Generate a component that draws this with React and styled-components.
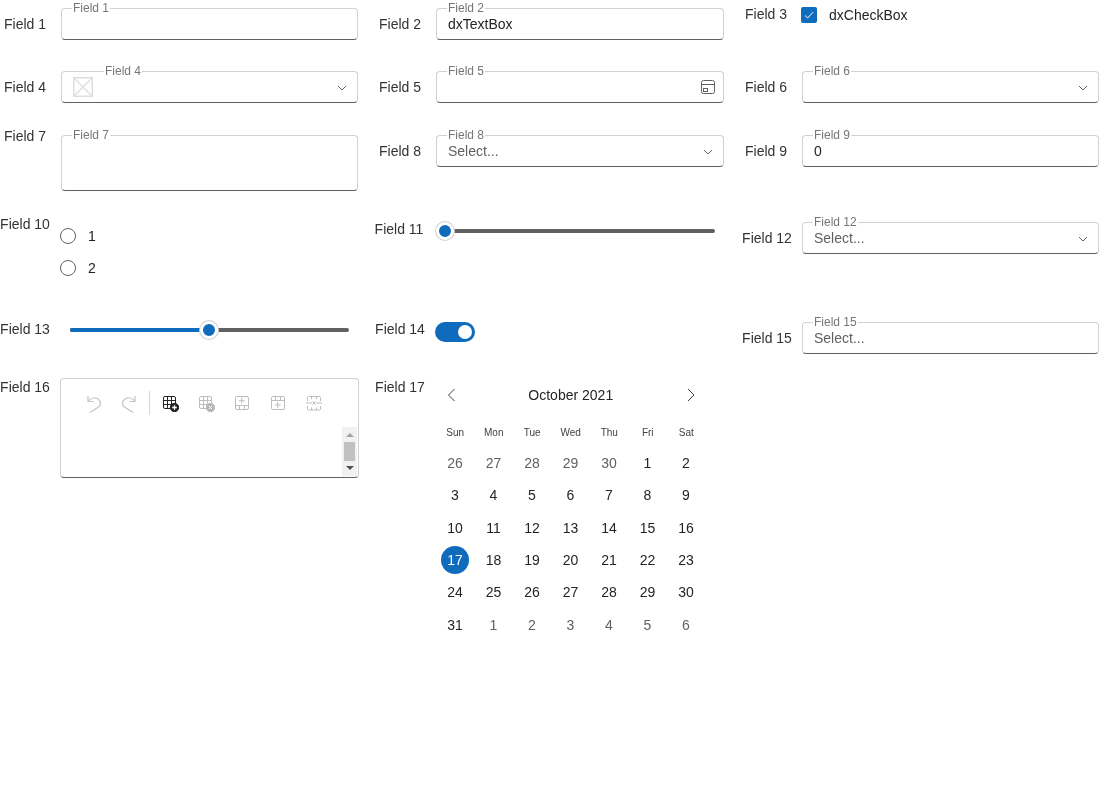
import React from "react";
import styled, { createGlobalStyle } from "styled-components";

const weekDays = ["Sun", "Mon", "Tue", "Wed", "Thu", "Fri", "Sat"];
const days = [
    26, 27, 28, 29, 30, 1, 2,
    3, 4, 5, 6, 7, 8, 9,
    10, 11, 12, 13, 14, 15, 16,
    17, 18, 19, 20, 21, 22, 23,
    24, 25, 26, 27, 28, 29, 30,
    31, 1, 2, 3, 4, 5, 6,
];

const Chevron = () => (
    <svg width="12" height="12" viewBox="0 0 12 12" fill="none" stroke="#616161">
        <path d="M2 5l4 4 4-4" />
    </svg>
);

const CalendarIcon = () => (
    <CalendarSvg width="16" height="16" viewBox="0 0 16 16" fill="none" stroke="#616161">
        <rect x="1.5" y="1.5" width="13" height="13" rx="2" />
        <path d="M1.5 5.500h13" />
        <rect x="3.500" y="9.500" width="4" height="3" />
    </CalendarSvg>
);

const EmptyImage = () => (
    <ImageIcon width="20" height="20" viewBox="0 0 20 20" fill="none" stroke="#dedede">
        <rect x="0.750" y="0.750" width="18.500" height="18.500" strokeWidth="1.500" />
        <path d="M1 1l18 18M19 1L1 19" strokeWidth="1.200" />
    </ImageIcon>
);

const TextBox = ({label, value, placeholder, labelLeft, height, icon, children}) => (
    <Box $height={height}>
        <Legend $left={labelLeft}>{label}</Legend>
        {children}
        {value && <Value>{value}</Value>}
        {placeholder && <Placeholder>{placeholder}</Placeholder>}
        {icon && <BoxIcon>{icon}</BoxIcon>}
    </Box>
);

const Slider = ({percent, left, width}) => (
    <SliderTrack $left={left} $width={width}>
        <SliderFill style={{width: `${percent}%`}} />
        <SliderThumb style={{left: `${percent}%`}} />
    </SliderTrack>
);

const TableGrid = () => (
    <>
        <rect x="2.500" y="2.500" width="12" height="12" rx="1.500" />
        <path d="M2.500 6.500h12M2.500 10.500h12M6.500 2.500v12M10.500 2.500v12" />
    </>
);

const Toolbar = () => (
    <ToolbarRow>
        <ToolButton>
            <svg width="20" height="20" viewBox="0 0 20 20" fill="none" stroke="#c4c4c4" strokeWidth="1.200">
                <path d="M4 3v5.500h5.500" />
                <path d="M4.200 8.500C7 4.500 11 4 14 6c3.500 2.500 3 6 .5 8L6 19.500" />
            </svg>
        </ToolButton>
        <ToolButton>
            <svg width="20" height="20" viewBox="0 0 20 20" fill="none" stroke="#c4c4c4" strokeWidth="1.200">
                <path d="M16 3v5.500h-5.500" />
                <path d="M15.800 8.500C13 4.500 9 4 6 6c-3.500 2.500-3 6-.5 8l8.500 5.500" />
            </svg>
        </ToolButton>
        <ToolSeparator />
        <ToolButton $wide>
            <svg width="18" height="18" viewBox="0 0 18 18" fill="none" stroke="#242424">
                <TableGrid />
                <circle cx="13.500" cy="13.500" r="4.200" fill="#242424" />
                <path d="M13.500 11.200v4.600M11.200 13.500h4.600" stroke="#fff" strokeWidth="1.300" />
            </svg>
        </ToolButton>
        <ToolButton $wide>
            <svg width="18" height="18" viewBox="0 0 18 18" fill="none" stroke="#bdbdbd">
                <TableGrid />
                <circle cx="13.500" cy="13.500" r="4.200" fill="#b5b5b5" />
                <path d="M12 12l3 3M15 12l-3 3" stroke="#fff" />
            </svg>
        </ToolButton>
        <ToolButton $wide>
            <svg width="18" height="18" viewBox="0 0 18 18" fill="none" stroke="#bdbdbd">
                <rect x="2.500" y="2.500" width="13" height="13" rx="1.500" />
                <path d="M2.500 11.500h13M6.500 11.500v4M11.500 11.500v4M8.700 3.700v6M5.700 6.700h6" />
            </svg>
        </ToolButton>
        <ToolButton $wide>
            <svg width="18" height="18" viewBox="0 0 18 18" fill="none" stroke="#bdbdbd">
                <rect x="2.500" y="2.500" width="13" height="13" rx="1.500" />
                <path d="M2.500 6.500h13M6.500 2.500v4M11.500 2.500v4M8.700 8v6M5.700 11h6" />
            </svg>
        </ToolButton>
        <ToolButton $wide>
            <svg width="18" height="18" viewBox="0 0 18 18" fill="none" stroke="#bdbdbd">
                <path d="M2.500 7V3.500a1 1 0 0 1 1-1h11a1 1 0 0 1 1 1V7M6.500 2.500V5M11.500 2.500V5" />
                <path d="M2.500 12v3a1 1 0 0 0 1 1h11a1 1 0 0 0 1-1v-3M6.500 13.500V16M11.500 13.500V16" />
                <path d="M1 9h6M11 9h6M7.500 7.500l3 3M10.500 7.500l-3 3" />
            </svg>
        </ToolButton>
    </ToolbarRow>
);

const Calendar = () => (
    <CalendarWrap>
        <CalendarHeader>
            <NavButton>
                <svg width="14" height="14" viewBox="0 0 14 14" fill="none" stroke="#424242">
                    <path d="M10.500 1L4.500 7l6 6" />
                </svg>
            </NavButton>
            <CalendarTitle>October 2021</CalendarTitle>
            <NavButton>
                <svg width="14" height="14" viewBox="0 0 14 14" fill="none" stroke="#424242">
                    <path d="M4 1l6 6-6 6" />
                </svg>
            </NavButton>
        </CalendarHeader>
        <WeekRow>
            {weekDays.map(day => <WeekDay key={day}>{day}</WeekDay>)}
        </WeekRow>
        <DayGrid>
            {days.map((day, i) => {
                const other = i < 5 || i > 35;
                return (
                    <Day key={i} $other={other}>
                        {i === 21 ? <Selected>{day}</Selected> : day}
                    </Day>
                );
            })}
        </DayGrid>
    </CalendarWrap>
);

const App = () => {
    return (
        <>
            <GlobalStyle />
            <Page>
                <Row $height={63}>
                    <Field>
                        <Label $top={16}>Field 1</Label>
                        <Editor $top={8}><TextBox label="Field 1" /></Editor>
                    </Field>
                    <Field>
                        <Label $top={16}>Field 2</Label>
                        <Editor $top={8}><TextBox label="Field 2" value="dxTextBox" /></Editor>
                    </Field>
                    <Field>
                        <Label $top={6}>Field 3</Label>
                        <Editor $top={7} $left={-1}>
                            <CheckRow>
                                <CheckBox>
                                    <svg width="12" height="12" viewBox="0 0 12 12" fill="none" stroke="#fff">
                                        <path d="M2 6.500l2.700 2.500L10 3.200" />
                                    </svg>
                                </CheckBox>
                                <span>dxCheckBox</span>
                            </CheckRow>
                        </Editor>
                    </Field>
                </Row>

                <Row $height={64}>
                    <Field>
                        <Label $top={16}>Field 4</Label>
                        <Editor $top={8}>
                            <TextBox label="Field 4" labelLeft={42} icon={<Chevron />}>
                                <EmptyImage />
                            </TextBox>
                        </Editor>
                    </Field>
                    <Field>
                        <Label $top={16}>Field 5</Label>
                        <Editor $top={8}><TextBox label="Field 5" icon={<CalendarIcon />} /></Editor>
                    </Field>
                    <Field>
                        <Label $top={16}>Field 6</Label>
                        <Editor $top={8}><TextBox label="Field 6" icon={<Chevron />} /></Editor>
                    </Field>
                </Row>

                <Row $height={80}>
                    <Field>
                        <Label $top={1}>Field 7</Label>
                        <Editor $top={8}><TextBox label="Field 7" height={56} /></Editor>
                    </Field>
                    <Field>
                        <Label $top={16}>Field 8</Label>
                        <Editor $top={8}><TextBox label="Field 8" placeholder="Select..." icon={<Chevron />} /></Editor>
                    </Field>
                    <Field>
                        <Label $top={16}>Field 9</Label>
                        <Editor $top={8}><TextBox label="Field 9" value="0" /></Editor>
                    </Field>
                </Row>

                <Row $height={107}>
                    <Field>
                        <Label $top={9}>Field 10</Label>
                        <Editor $top={21} $left={-1}>
                            <RadioGroup>
                                <RadioRow><Radio />1</RadioRow>
                                <RadioRow><Radio />2</RadioRow>
                            </RadioGroup>
                        </Editor>
                    </Field>
                    <Field>
                        <Label $top={14} $shift={-1}>Field 11</Label>
                        <Editor $top={22}><Slider percent={0} left={9} width={270} /></Editor>
                    </Field>
                    <Field>
                        <Label $top={23} $shift={1}>Field 12</Label>
                        <Editor $top={15}><TextBox label="Field 12" placeholder="Select..." icon={<Chevron />} /></Editor>
                    </Field>
                </Row>

                <Row $height={56}>
                    <Field>
                        <Label $top={7}>Field 13</Label>
                        <Editor $top={14} $left={9}><Slider percent={49.8} left={0} width={279} /></Editor>
                    </Field>
                    <Field>
                        <Label $top={7}>Field 14</Label>
                        <Editor $top={8} $left={-1}>
                            <Switch><SwitchKnob /></Switch>
                        </Editor>
                    </Field>
                    <Field>
                        <Label $top={16} $shift={1}>Field 15</Label>
                        <Editor $top={8}><TextBox label="Field 15" placeholder="Select..." /></Editor>
                    </Field>
                </Row>

                <Row $height={280}>
                    <Field>
                        <Label $top={9}>Field 16</Label>
                        <Editor $top={8} $left={-1}>
                            <HtmlBox>
                                <Toolbar />
                                <ScrollBar>
                                    <ScrollArrow $up />
                                    <ScrollThumb />
                                    <ScrollArrow />
                                </ScrollBar>
                            </HtmlBox>
                        </Editor>
                    </Field>
                    <Field>
                        <Label $top={9}>Field 17</Label>
                        <Editor $top={8}><Calendar /></Editor>
                    </Field>
                </Row>
            </Page>
        </>
    )
}

export default App;

const GlobalStyle = createGlobalStyle`
    * {
        box-sizing: border-box;
    }
    body {
        margin: 0;
        background: #fff;
        color: #242424;
        font-family: "Liberation Sans", Arial, sans-serif;
        font-size: 14px;
    }
`

const Page = styled.div`
    width: 1100px;
    will-change: transform;
`

const Row = styled.div`
    display: grid;
    grid-template-columns: 358px 349px 358px;
    column-gap: 17px;
    height: ${props => props.$height}px;
`

const Field = styled.div`
    display: flex;
    align-items: flex-start;
`

const Label = styled.div`
    flex: 0 0 50px;
    text-align: center;
    line-height: 16px;
    white-space: nowrap;
    color: #333;
    margin-top: ${props => props.$top}px;
    margin-left: ${props => props.$shift || 0}px;
    margin-right: ${props => -(props.$shift || 0)}px;
`

const Editor = styled.div`
    margin-top: ${props => props.$top}px;
    margin-left: ${props => 11 + (props.$left || 0)}px;
    flex: 1;
    min-width: 0;
`

const Box = styled.div`
    position: relative;
    display: flex;
    align-items: center;
    height: ${props => props.$height || 32}px;
    padding: 0 11px;
    border: 1px solid #d1d1d1;
    border-bottom-color: #616161;
    border-radius: 4px;
    background: #fff;
`

const Legend = styled.span`
    position: absolute;
    top: -7px;
    left: ${props => props.$left || 10}px;
    padding: 0 1px;
    font-size: 12px;
    line-height: 12px;
    color: #767676;
    background: #fff;
`

const Value = styled.span`
    color: #242424;
`

const Placeholder = styled.span`
    color: #616161;
`

const BoxIcon = styled.span`
    display: flex;
    margin-left: auto;
    margin-right: -2px;
`

const CalendarSvg = styled.svg`
    margin-right: -2px;
`

const ImageIcon = styled.svg`
    flex: none;
`

const CheckRow = styled.label`
    display: flex;
    align-items: center;
    gap: 12px;
`

const CheckBox = styled.span`
    display: flex;
    align-items: center;
    justify-content: center;
    width: 16px;
    height: 16px;
    border-radius: 2px;
    background: #0f6cbd;
`

const RadioGroup = styled.div`
    display: flex;
    flex-direction: column;
    gap: 15.5px;
`

const RadioRow = styled.label`
    display: flex;
    align-items: center;
    gap: 12px;
    height: 16px;
`

const Radio = styled.span`
    width: 16px;
    height: 16px;
    border: 1px solid #616161;
    border-radius: 50%;
`

const SliderTrack = styled.div`
    position: relative;
    width: ${props => props.$width}px;
    height: 4px;
    margin-left: ${props => props.$left}px;
    border-radius: 2px;
    background: #616161;
`

const SliderFill = styled.div`
    height: 100%;
    border-radius: 2px;
    background: #0f6cbd;
`

const SliderThumb = styled.div`
    position: absolute;
    top: 50%;
    width: 18px;
    height: 18px;
    border: 3px solid #fff;
    border-radius: 50%;
    background: #0f6cbd;
    box-shadow: 0 0 0 1px #d1d1d1;
    transform: translate(-50%, -50%);
`

const Switch = styled.div`
    display: flex;
    align-items: center;
    justify-content: flex-end;
    width: 40px;
    height: 20px;
    padding-right: 3px;
    border-radius: 10px;
    background: #0f6cbd;
`

const SwitchKnob = styled.span`
    width: 14px;
    height: 14px;
    border-radius: 50%;
    background: #fff;
`

const HtmlBox = styled.div`
    display: flex;
    flex-direction: column;
    width: 299px;
    height: 100px;
    border: 1px solid #d1d1d1;
    border-bottom-color: #616161;
    border-radius: 4px;
`

const ToolbarRow = styled.div`
    display: flex;
    align-items: center;
    height: 48px;
    padding-left: 15px;
`

const ToolButton = styled.span`
    display: flex;
    align-items: center;
    justify-content: center;
    width: ${props => props.$wide ? 36 : 35}px;
    height: 24px;
`

const ToolSeparator = styled.span`
    width: 1px;
    height: 24px;
    margin: 0 2px 0 3px;
    background: #d6d6d6;
`

const ScrollBar = styled.div`
    display: flex;
    flex-direction: column;
    align-items: center;
    align-self: flex-end;
    justify-content: space-between;
    width: 15px;
    height: 49px;
    margin-right: 1px;
    padding: 6px 0;
    background: #f1f1f1;
`

const ScrollThumb = styled.div`
    width: 11px;
    height: 19px;
    background: #c1c1c1;
`

const ScrollArrow = styled.span`
    width: 0;
    height: 0;
    border-left: 4px solid transparent;
    border-right: 4px solid transparent;
    border-top: ${props => props.$up ? "none" : "4px solid #505050"};
    border-bottom: ${props => props.$up ? "4px solid #a3a3a3" : "none"};
`

const CalendarWrap = styled.div`
    width: 269.5px;
`

const CalendarHeader = styled.div`
    display: flex;
    align-items: center;
    justify-content: space-between;
    height: 34px;
    margin-bottom: 5px;
    padding: 0 8px;
`

const NavButton = styled.span`
    display: flex;
    width: 14px;
`

const CalendarTitle = styled.span`
    color: #242424;
`

const WeekRow = styled.div`
    display: grid;
    grid-template-columns: repeat(7, 38.5px);
    height: 30px;
`

const WeekDay = styled.span`
    display: flex;
    align-items: center;
    justify-content: center;
    font-size: 10px;
    color: #424242;
`

const DayGrid = styled.div`
    display: grid;
    grid-template-columns: repeat(7, 38.5px);
    grid-auto-rows: 32.33px;
    margin-left: -0.25px;
`

const Day = styled.span`
    display: flex;
    align-items: center;
    justify-content: center;
    color: ${props => props.$other ? "#616161" : "#242424"};
`

const Selected = styled.span`
    display: flex;
    align-items: center;
    justify-content: center;
    width: 28px;
    height: 28px;
    border-radius: 50%;
    color: #fff;
    background: #0f6cbd;
`
